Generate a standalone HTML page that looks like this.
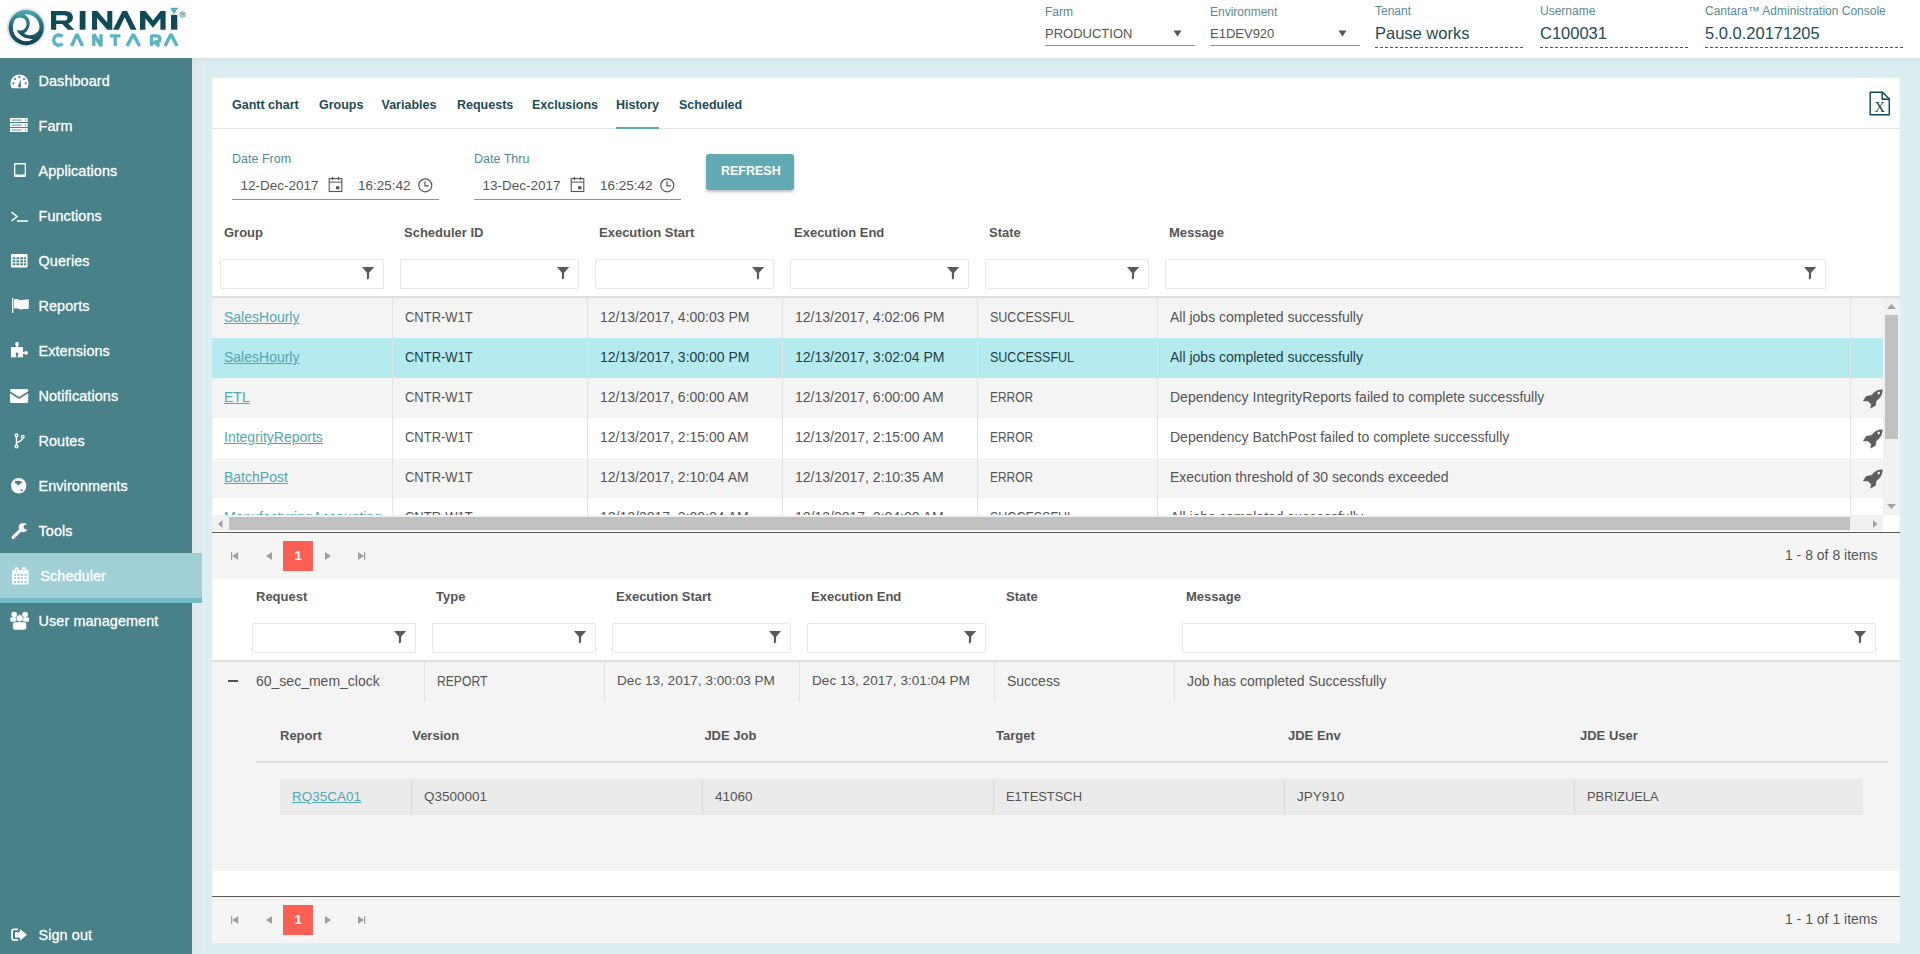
<!DOCTYPE html>
<html><head><meta charset="utf-8"><style>
*{margin:0;padding:0;box-sizing:border-box}
html,body{width:1920px;height:954px;overflow:hidden}
body{background:#dbeff2;font-family:"Liberation Sans",sans-serif;position:relative;color:#555}
.a{position:absolute}
.t{position:absolute;line-height:1;white-space:nowrap}
.nav{color:#fff;-webkit-text-stroke:0.3px #fff;letter-spacing:0.1px}
.hl{color:#4f8c95}
.hh{color:#5a8a92}
.tab{font-weight:700;color:#1d4b57}
.th{font-weight:700;color:#555}
.td{color:#555}
.lnk{color:#50a8b3;text-decoration:underline;text-underline-offset:1px}
.flt{position:absolute;height:30px;border:1px solid #e8e8e8;border-radius:2px;background:#fff}
.vb{position:absolute;width:1px;background:#e2e2e2}
svg{position:absolute;overflow:visible}
</style></head><body>
<div class="a" style="left:0px;top:0px;width:1920px;height:58px;background:#fff;"></div>
<svg style="left:0;top:0" width="200" height="58" viewBox="0 0 200 58">
  <defs><linearGradient id="lg" x1="0" y1="0" x2="0" y2="1"><stop offset="0" stop-color="#4eaab5"/><stop offset="0.5" stop-color="#1f6470"/><stop offset="1" stop-color="#0c4250"/></linearGradient></defs>
  <circle cx="26.2" cy="27.6" r="19.6" fill="#e4e4e4"/>
  <circle cx="26.2" cy="27.6" r="17.6" fill="url(#lg)"/>
  <g fill="#fff">
    <circle cx="20" cy="24" r="6.6"/><path d="M12.95 23L15.3 28.4L16.4 29.3L13 28.3Z"/>
    <path d="M24.1 14.3C27.5 16.5 30 19.5 29.8 23.5C29.6 27 27.5 31 24.1 33.5C27 35.5 31 36 35 34C37.5 32.5 39 30.5 39.5 28A13.3 13.3 0 0 0 24.1 14.3Z"/>
    <path d="M16.2 29.1C17.5 32.5 21 36.5 25.1 37.8C28 38.8 31 39 33.2 39.2A13.4 13.4 0 0 1 12.9 26.5C14 27.5 15 28.3 16.2 29.1Z"/>
  </g>
  <g fill="#0f4a58" fill-rule="evenodd">
    <path d="M51 11h13.8c5 0 8.2 2.8 8.2 6.6c0 3-1.9 5.2-4.9 5.9l6.3 6.2h-6.5l-5.6-5.7h-6.1v5.7h-5.2zM56.2 15.3v5.2h8.2c1.8 0 3.1-1 3.1-2.6s-1.3-2.6-3.1-2.6z"/>
    <rect x="79.7" y="11" width="5.8" height="18.7"/>
    <path d="M92 29.7V11h5.3l10 11.5V11h5v18.7h-5l-10.3-11.7v11.7z"/>
    <path d="M113 29.7l9.5-18.7h4.5l9.5 18.7h-5.8l-6-12.5-6 12.5z"/>
    <path d="M140 29.7V11h5.5l7.5 9.5 7.5-9.5h5.1v18.7h-5.2V18.5l-7.4 9.2-7.6-9.2v11.2z"/>
    <rect x="171" y="14.8" width="6.3" height="14.9"/>
  </g>
  <path d="M170 7.8h8.2l-4.1 6.4z" fill="#4fb0bd"/>
  <circle cx="182.5" cy="14.5" r="2.7" fill="none" stroke="#3f7f8a" stroke-width="0.8"/>
  <text x="182.5" y="16.2" font-family="Liberation Sans" font-size="4.2" font-weight="700" fill="#3f7f8a" text-anchor="middle">R</text>
  <g fill="none" stroke="#58b5c1" stroke-width="3.4" stroke-linejoin="bevel">
    <path d="M62.5 36.6a5.1 5.1 0 1 0 0 7"/>
    <path d="M71.5 46L77 34.2L82.5 46"/>
    <path d="M93.8 46V34.2l7.2 11.8V34.2"/>
    <path d="M110 35.9h10.5M115.2 35.9v10.1"/>
    <path d="M127 46l6.3-11.8l6.3 11.8"/>
    <path d="M151.5 46V35.9h4.8c2.3 0 3.6 1.2 3.6 3s-1.3 3-3.6 3h-2.5l5.5 4.1"/>
    <path d="M165 46l6-11.8l6 11.8"/>
  </g>
</svg>
<div class="t hh" style="left:1045px;top:5.84px;font-size:12px;">Farm</div>
<div class="t " style="left:1045px;top:27.00px;font-size:13px;">PRODUCTION</div>
<svg style="left:1173px;top:29.5px" width="9" height="7"><path d="M0.5 0.5h8l-4 6z" fill="#555"/></svg>
<div class="a" style="left:1045px;top:45px;width:150px;height:1px;background:#5aa9b3;"></div>
<div class="t hh" style="left:1210px;top:5.84px;font-size:12px;">Environment</div>
<div class="t " style="left:1210px;top:27.00px;font-size:13px;">E1DEV920</div>
<svg style="left:1338px;top:29.5px" width="9" height="7"><path d="M0.5 0.5h8l-4 6z" fill="#555"/></svg>
<div class="a" style="left:1210px;top:45px;width:150px;height:1px;background:#5aa9b3;"></div>
<div class="t hh" style="left:1375px;top:4.84px;font-size:12px;">Tenant</div>
<div class="t " style="left:1375px;top:24.83px;font-size:16.5px;color:#1d4b57">Pause works</div>
<div class="a" style="left:1375px;top:47px;width:150px;height:1px;background:repeating-linear-gradient(to right,#2f6873 0,#2f6873 3px,transparent 3px,transparent 5px);"></div>
<div class="t hh" style="left:1540px;top:4.84px;font-size:12px;">Username</div>
<div class="t " style="left:1540px;top:24.83px;font-size:16.5px;color:#1d4b57">C100031</div>
<div class="a" style="left:1540px;top:47px;width:150px;height:1px;background:repeating-linear-gradient(to right,#2f6873 0,#2f6873 3px,transparent 3px,transparent 5px);"></div>
<div class="t hh" style="left:1705px;top:4.84px;font-size:12px;">Cantara™ Administration Console</div>
<div class="t " style="left:1705px;top:24.83px;font-size:16.5px;color:#1d4b57">5.0.0.20171205</div>
<div class="a" style="left:1705px;top:47px;width:200px;height:1px;background:repeating-linear-gradient(to right,#2f6873 0,#2f6873 3px,transparent 3px,transparent 5px);"></div>
<div class="a" style="left:0px;top:58px;width:192px;height:896px;background:#48818a;"></div>
<div class="a" style="left:192px;top:58px;width:14px;height:896px;background:linear-gradient(to right,rgba(226,228,229,0.9),rgba(226,228,229,0.45) 45%,rgba(226,228,229,0));"></div>
<div class="a" style="left:192px;top:58px;width:1728px;height:6px;background:linear-gradient(to bottom,rgba(60,60,60,0.06),rgba(60,60,60,0));"></div>
<div class="a" style="left:0px;top:553px;width:202px;height:45px;background:#a0d0d5;"></div>
<div class="a" style="left:0px;top:598px;width:202px;height:5px;background:#74bbc4;"></div>
<div class="t nav" style="left:38.5px;top:73.81px;font-size:14.4px;">Dashboard</div>
<svg style="left:10px;top:74px" width="19" height="15" viewBox="0 0 19 15"><path d="M9.5 0.5C4.5 0.5 0.5 4.6 0.5 9.6C0.5 11 0.8 12.4 1.4 13.6L1.8 14.3H17.2L17.6 13.6C18.2 12.4 18.5 11 18.5 9.6C18.5 4.6 14.5 0.5 9.5 0.5Z" fill="#fff"/><g fill="#48818a"><circle cx="9.5" cy="3.2" r="1.1"/><circle cx="5" cy="5" r="1.1"/><circle cx="3.3" cy="9.4" r="1.1"/><circle cx="14" cy="5" r="1.1"/><circle cx="15.7" cy="9.4" r="1.1"/><path d="M8.2 11.8L10.8 5.2 10.9 12.2Z"/><circle cx="9.6" cy="12" r="1.6"/></g></svg>
<div class="t nav" style="left:38.5px;top:118.81px;font-size:14.4px;">Farm</div>
<svg style="left:10.4px;top:118px" width="17.7" height="14" viewBox="0 0 17.7 14"><g fill="#fff"><rect x="0" y="0" width="17.7" height="4"/><rect x="0" y="5" width="17.7" height="4"/><rect x="0" y="10" width="17.7" height="4"/></g><g fill="#48818a"><rect x="1.7" y="1.6" width="10" height="0.9"/><rect x="1.7" y="6.6" width="10" height="0.9"/><rect x="1.7" y="11.6" width="10" height="0.9"/><circle cx="15.6" cy="2" r="0.75"/><circle cx="15.6" cy="7" r="0.75"/><circle cx="15.6" cy="12" r="0.75"/></g></svg>
<div class="t nav" style="left:38.5px;top:163.81px;font-size:14.4px;">Applications</div>
<svg style="left:13.7px;top:163.3px" width="12" height="14" viewBox="0 0 11.7 13.6"><path fill-rule="evenodd" fill="#fff" d="M1.2 0H10.5C11.2 0 11.7 0.5 11.7 1.2V12.4C11.7 13.1 11.2 13.6 10.5 13.6H1.2C0.5 13.6 0 13.1 0 12.4V1.2C0 0.5 0.5 0 1.2 0ZM1.3 1.4V11.2H10.4V1.4Z"/><circle cx="5.85" cy="12.4" r="0.5" fill="#48818a"/></svg>
<div class="t nav" style="left:38.5px;top:208.81px;font-size:14.4px;">Functions</div>
<svg style="left:11px;top:211px" width="18" height="12" viewBox="0 0 18 12"><path d="M0.6 1.1L6.1 5.5L0.6 9.9" fill="none" stroke="#fff" stroke-width="1.5"/><rect x="6" y="9.3" width="11" height="1.5" fill="#fff"/></svg>
<div class="t nav" style="left:38.5px;top:253.81px;font-size:14.4px;">Queries</div>
<svg style="left:11.3px;top:253.5px" width="16.5" height="13.5" viewBox="0 0 16.5 13.5"><rect x="0" y="0" width="16.5" height="13.5" rx="1.2" fill="#fff"/><g fill="#48818a"><rect x="1.6" y="3.3" width="2.8" height="2"/><rect x="5.4" y="3.3" width="2.8" height="2"/><rect x="9.2" y="3.3" width="2.8" height="2"/><rect x="13" y="3.3" width="2" height="2"/><rect x="1.6" y="6.3" width="2.8" height="2"/><rect x="5.4" y="6.3" width="2.8" height="2"/><rect x="9.2" y="6.3" width="2.8" height="2"/><rect x="13" y="6.3" width="2" height="2"/><rect x="1.6" y="9.3" width="2.8" height="2"/><rect x="5.4" y="9.3" width="2.8" height="2"/><rect x="9.2" y="9.3" width="2.8" height="2"/><rect x="13" y="9.3" width="2" height="2"/></g></svg>
<div class="t nav" style="left:38.5px;top:298.81px;font-size:14.4px;">Reports</div>
<svg style="left:11.5px;top:298px" width="17" height="15" viewBox="0 0 17 15"><rect x="0" y="0" width="1.3" height="15" fill="#fff"/><path d="M2 1.5C5 0 7.5 2.8 10.5 2C13 1.3 15 1.5 16.8 1.2V10.5C14.5 11.5 12.5 10.8 10 11.3C7.2 12 5 9.3 2 10.8Z" fill="#fff"/></svg>
<div class="t nav" style="left:38.5px;top:343.81px;font-size:14.4px;">Extensions</div>
<svg style="left:10px;top:341px" width="19" height="18" viewBox="0 0 19 18"><g fill="#fff"><rect x="1" y="6" width="12" height="10.3"/><circle cx="7" cy="2.9" r="1.95"/><rect x="6.1" y="4" width="1.8" height="2.5"/><circle cx="16.1" cy="11.8" r="1.85"/><rect x="12.5" y="10.9" width="2.5" height="1.8"/></g><g fill="#48818a"><circle cx="7" cy="13" r="1.45"/><rect x="6.2" y="13" width="1.6" height="3.5"/></g></svg>
<div class="t nav" style="left:38.5px;top:388.81px;font-size:14.4px;">Notifications</div>
<svg style="left:10.3px;top:389.4px" width="18.2" height="14" viewBox="0 0 18.2 14"><path d="M1.5 0H16.7C17.5 0 18.2 0.7 18.2 1.5V2.2L9.1 8L0 2.2V1.5C0 0.7 0.7 0 1.5 0Z" fill="#fff"/><path d="M0 4.3L9.1 10.1L18.2 4.3V12.5C18.2 13.3 17.5 14 16.7 14H1.5C0.7 14 0 13.3 0 12.5Z" fill="#fff"/></svg>
<div class="t nav" style="left:38.5px;top:433.81px;font-size:14.4px;">Routes</div>
<svg style="left:13px;top:433px" width="13" height="16" viewBox="0 0 13 16"><g fill="none" stroke="#fff" stroke-width="1.4"><circle cx="3.5" cy="2.4" r="1.35"/><circle cx="9.7" cy="3.7" r="1.35"/><circle cx="3.5" cy="13.4" r="1.35"/><path d="M3.5 3.8V12M9.7 5.1C9.7 8.3 4.8 8 3.5 10.5"/></g></svg>
<div class="t nav" style="left:38.5px;top:478.81px;font-size:14.4px;">Environments</div>
<svg style="left:11.3px;top:478.3px" width="15.4" height="15.4" viewBox="0 0 15.4 15.4"><circle cx="7.7" cy="7.7" r="7.7" fill="#fff"/><path d="M3.7 3.6C5 2.7 6.5 2.5 8 2.7C9.2 2.9 10.3 3.5 11.4 4.2C10.8 4.8 10 5.1 9.3 5.6C8.6 6.2 8.4 7.1 7.8 7.7C7.1 7.3 6.6 6.5 5.9 6.1C5.2 5.6 4.4 5.3 3.8 4.7Z M9.6 11.4C10.4 11.3 11.3 11.4 12.1 11.6C11.6 12.4 10.9 13.1 10.1 13.7C9.8 12.9 9.6 12.2 9.6 11.4Z" fill="#48818a"/></svg>
<div class="t nav" style="left:38.5px;top:523.81px;font-size:14.4px;">Tools</div>
<svg style="left:10px;top:521px" width="20" height="20" viewBox="0 0 20 20"><path d="M11 8.6L3.2 16.4" stroke="#fff" stroke-width="3.3" stroke-linecap="round"/><circle cx="13.2" cy="6.6" r="4.6" fill="#fff"/><circle cx="15.6" cy="6.1" r="2.1" fill="#48818a"/><path d="M15.6 4L20 1.5V10L15.6 8.2Z" fill="#48818a"/><circle cx="4.3" cy="15.5" r="0.55" fill="#9a7fb0"/></svg>
<div class="t nav" style="left:40.3px;top:568.81px;font-size:14.4px;">Scheduler</div>
<svg style="left:12px;top:566px" width="17" height="19" viewBox="0 0 17 19"><g fill="#fff"><rect x="0.1" y="4" width="16.5" height="14.5" rx="0.8"/><rect x="2.8" y="1" width="3.8" height="5" rx="1.9"/><rect x="10" y="1" width="3.8" height="5" rx="1.9"/></g><g fill="#a0d0d5"><rect x="4.3" y="2.6" width="0.8" height="3.2"/><rect x="11.5" y="2.6" width="0.8" height="3.2"/><rect x="2" y="7.8" width="2" height="2"/><rect x="5.2" y="7.8" width="2.6" height="2"/><rect x="9" y="7.8" width="2" height="2"/><rect x="12.5" y="7.8" width="2.3" height="2"/><rect x="2" y="11.2" width="2" height="2.1"/><rect x="5.2" y="11.2" width="2.6" height="2.1"/><rect x="9" y="11.2" width="2" height="2.1"/><rect x="12.5" y="11.2" width="2.3" height="2.1"/><rect x="2" y="15" width="2" height="2"/><rect x="5.2" y="15" width="2.6" height="2"/><rect x="9" y="15" width="2" height="2"/><rect x="12.5" y="15" width="2.3" height="2"/></g></svg>
<div class="t nav" style="left:38.5px;top:613.81px;font-size:14.4px;">User management</div>
<svg style="left:9.8px;top:612px" width="19.5" height="18.5" viewBox="0 0 19.5 18.5"><g fill="#fff"><circle cx="4.2" cy="2.5" r="2.8"/><circle cx="15.1" cy="2.5" r="2.8"/><rect x="0.3" y="5.2" width="6" height="4.6" rx="1.2"/><rect x="13" y="5.2" width="6" height="4.6" rx="1.2"/></g><g fill="#fff" stroke="#48818a" stroke-width="0.5"><rect x="2.7" y="9.9" width="13.8" height="8.1" rx="2.2"/><circle cx="9.7" cy="6.3" r="3.5"/></g></svg>
<div class="t nav" style="left:38.5px;top:927.81px;font-size:14.4px;">Sign out</div>
<svg style="left:10px;top:927px" width="18" height="16" viewBox="0 0 18 16"><path d="M8 2.35H4C2.8 2.35 2.05 3.1 2.05 4.3V11C2.05 12.2 2.8 12.95 4 12.95H8" fill="none" stroke="#fff" stroke-width="1.75"/><path d="M5 5.2H9.9V1.9L17 7.8L9.9 13.7V10.5H5Z" fill="#fff"/></svg>
<div class="a" style="left:212px;top:78px;width:1688px;height:865px;background:#fff;"></div>
<div class="t tab" style="left:232px;top:98.62px;font-size:12.5px;">Gantt chart</div>
<div class="t tab" style="left:319px;top:98.62px;font-size:12.5px;">Groups</div>
<div class="t tab" style="left:381.5px;top:98.62px;font-size:12.5px;">Variables</div>
<div class="t tab" style="left:457px;top:98.62px;font-size:12.5px;">Requests</div>
<div class="t tab" style="left:532px;top:98.62px;font-size:12.5px;">Exclusions</div>
<div class="t tab" style="left:616px;top:98.62px;font-size:12.5px;">History</div>
<div class="t tab" style="left:679px;top:98.62px;font-size:12.5px;">Scheduled</div>
<div class="a" style="left:212px;top:128px;width:1688px;height:1px;background:#e2e2e2;"></div>
<div class="a" style="left:616px;top:127px;width:43px;height:2px;background:#5aa9b3;"></div>
<svg style="left:1869px;top:91px" width="22" height="25" viewBox="0 0 22 25"><path d="M1.2 1.2H13.6L20.3 7.9V23.8H1.2Z" fill="none" stroke="#0d4654" stroke-width="1.4" stroke-linejoin="round"/><path d="M13.2 1.2V8.2H20.3" fill="none" stroke="#0d4654" stroke-width="1.4"/><text x="10.7" y="20.8" font-family="Liberation Serif" font-size="14.5" fill="#0d4654" text-anchor="middle">X</text></svg>
<div class="t hl" style="left:232px;top:153.02px;font-size:12.5px;">Date From</div>
<div class="t td" style="left:240.5px;top:179.07px;font-size:13.5px;">12-Dec-2017</div>
<svg style="left:328px;top:177px" width="15" height="15" viewBox="0 0 15 15"><rect x="1.2" y="1.6" width="12.6" height="12.9" fill="none" stroke="#555" stroke-width="1.1"/><rect x="1.2" y="4.6" width="12.6" height="1" fill="#555"/><rect x="3.9" y="0" width="1.1" height="3" fill="#555"/><rect x="10" y="0" width="1.1" height="3" fill="#555"/><rect x="8.1" y="9.2" width="3.3" height="3.1" fill="#555"/></svg>
<div class="t td" style="left:358px;top:179.07px;font-size:13.5px;">16:25:42</div>
<svg style="left:418px;top:177.5px" width="15" height="15" viewBox="0 0 15 15"><circle cx="7.3" cy="7.3" r="6.5" fill="none" stroke="#555" stroke-width="1.2"/><path d="M7 3.3V7.8H10.8" fill="none" stroke="#555" stroke-width="1.2"/></svg>
<div class="a" style="left:232px;top:199px;width:207px;height:1px;background:#5aa9b3;"></div>
<div class="t hl" style="left:474px;top:153.02px;font-size:12.5px;">Date Thru</div>
<div class="t td" style="left:482.5px;top:179.07px;font-size:13.5px;">13-Dec-2017</div>
<svg style="left:570px;top:177px" width="15" height="15" viewBox="0 0 15 15"><rect x="1.2" y="1.6" width="12.6" height="12.9" fill="none" stroke="#555" stroke-width="1.1"/><rect x="1.2" y="4.6" width="12.6" height="1" fill="#555"/><rect x="3.9" y="0" width="1.1" height="3" fill="#555"/><rect x="10" y="0" width="1.1" height="3" fill="#555"/><rect x="8.1" y="9.2" width="3.3" height="3.1" fill="#555"/></svg>
<div class="t td" style="left:600px;top:179.07px;font-size:13.5px;">16:25:42</div>
<svg style="left:660px;top:177.5px" width="15" height="15" viewBox="0 0 15 15"><circle cx="7.3" cy="7.3" r="6.5" fill="none" stroke="#555" stroke-width="1.2"/><path d="M7 3.3V7.8H10.8" fill="none" stroke="#555" stroke-width="1.2"/></svg>
<div class="a" style="left:474px;top:199px;width:207px;height:1px;background:#5aa9b3;"></div>
<div class="a" style="left:706px;top:154px;width:88px;height:36px;background:#61aab3;border-radius:3px;box-shadow:0 2px 3px rgba(0,0,0,0.25)"></div>
<div class="t " style="left:721px;top:165.22px;font-size:12.5px;color:#fff;font-weight:700">REFRESH</div>
<div class="t th" style="left:224px;top:225.90px;font-size:13px;">Group</div>
<div class="t th" style="left:404px;top:225.90px;font-size:13px;">Scheduler ID</div>
<div class="t th" style="left:599px;top:225.90px;font-size:13px;">Execution Start</div>
<div class="t th" style="left:794px;top:225.90px;font-size:13px;">Execution End</div>
<div class="t th" style="left:989px;top:225.90px;font-size:13px;">State</div>
<div class="t th" style="left:1169px;top:225.90px;font-size:13px;">Message</div>
<div class="flt" style="left:220px;top:259px;width:164px"></div>
<svg style="left:362px;top:267px" width="13" height="14" viewBox="0 0 13 14"><path d="M0 0H12.2L7.1 5.7V11.3L4.9 12.8V5.7Z" fill="#5a5a5a"/></svg>
<div class="flt" style="left:400px;top:259px;width:179px"></div>
<svg style="left:557px;top:267px" width="13" height="14" viewBox="0 0 13 14"><path d="M0 0H12.2L7.1 5.7V11.3L4.9 12.8V5.7Z" fill="#5a5a5a"/></svg>
<div class="flt" style="left:595px;top:259px;width:179px"></div>
<svg style="left:752px;top:267px" width="13" height="14" viewBox="0 0 13 14"><path d="M0 0H12.2L7.1 5.7V11.3L4.9 12.8V5.7Z" fill="#5a5a5a"/></svg>
<div class="flt" style="left:790px;top:259px;width:179px"></div>
<svg style="left:947px;top:267px" width="13" height="14" viewBox="0 0 13 14"><path d="M0 0H12.2L7.1 5.7V11.3L4.9 12.8V5.7Z" fill="#5a5a5a"/></svg>
<div class="flt" style="left:985px;top:259px;width:164px"></div>
<svg style="left:1127px;top:267px" width="13" height="14" viewBox="0 0 13 14"><path d="M0 0H12.2L7.1 5.7V11.3L4.9 12.8V5.7Z" fill="#5a5a5a"/></svg>
<div class="flt" style="left:1165px;top:259px;width:661px"></div>
<svg style="left:1804px;top:267px" width="13" height="14" viewBox="0 0 13 14"><path d="M0 0H12.2L7.1 5.7V11.3L4.9 12.8V5.7Z" fill="#5a5a5a"/></svg>
<div class="a" style="left:212px;top:296px;width:1688px;height:2px;background:#dedede;"></div>
<div class="a" style="left:212px;top:298px;width:1671px;height:217px;overflow:hidden">
<div class="a" style="left:0;top:0px;width:1671px;height:40px;background:#f4f4f4"></div>
<div class="t lnk" style="left:12px;top:12.45px;font-size:14px;">SalesHourly</div>
<div class="t td" style="left:193px;top:12.45px;font-size:14px;transform:scaleX(0.926);transform-origin:0 0;">CNTR-W1T</div>
<div class="t td" style="left:388px;top:12.45px;font-size:14px;">12/13/2017, 4:00:03 PM</div>
<div class="t td" style="left:583px;top:12.45px;font-size:14px;">12/13/2017, 4:02:06 PM</div>
<div class="t td" style="left:778px;top:12.45px;font-size:14px;transform:scaleX(0.893);transform-origin:0 0;">SUCCESSFUL</div>
<div class="t td" style="left:958px;top:12.45px;font-size:14px;">All jobs completed successfully</div>
<div class="a" style="left:0;top:40px;width:1671px;height:40px;background:#b5eaee"></div>
<div class="t lnk" style="left:12px;top:52.45px;font-size:14px;">SalesHourly</div>
<div class="t td" style="left:193px;top:52.45px;font-size:14px;transform:scaleX(0.926);transform-origin:0 0;color:#1f3f47">CNTR-W1T</div>
<div class="t td" style="left:388px;top:52.45px;font-size:14px;color:#1f3f47">12/13/2017, 3:00:00 PM</div>
<div class="t td" style="left:583px;top:52.45px;font-size:14px;color:#1f3f47">12/13/2017, 3:02:04 PM</div>
<div class="t td" style="left:778px;top:52.45px;font-size:14px;transform:scaleX(0.893);transform-origin:0 0;color:#1f3f47">SUCCESSFUL</div>
<div class="t td" style="left:958px;top:52.45px;font-size:14px;color:#1f3f47">All jobs completed successfully</div>
<div class="a" style="left:0;top:80px;width:1671px;height:40px;background:#f4f4f4"></div>
<div class="t lnk" style="left:12px;top:92.45px;font-size:14px;">ETL</div>
<div class="t td" style="left:193px;top:92.45px;font-size:14px;transform:scaleX(0.926);transform-origin:0 0;">CNTR-W1T</div>
<div class="t td" style="left:388px;top:92.45px;font-size:14px;">12/13/2017, 6:00:00 AM</div>
<div class="t td" style="left:583px;top:92.45px;font-size:14px;">12/13/2017, 6:00:00 AM</div>
<div class="t td" style="left:778px;top:92.45px;font-size:14px;transform:scaleX(0.854);transform-origin:0 0;">ERROR</div>
<div class="t td" style="left:958px;top:92.45px;font-size:14px;">Dependency IntegrityReports failed to complete successfully</div>
<svg style="left:1650px;top:90px" width="22" height="22" viewBox="0 0 22 22"><path d="M20.4 1.7C17.5 1.6 15.5 2.2 13.6 3.4C12 4.5 10.8 5.8 9.6 7.2L4.2 8.3L1.2 12.9L5.9 12.9L9.3 16.3L8.5 20.2L13.6 17.4L14.1 13.1C15.6 11.9 17 10.6 18.1 9.2C19.6 7 20.4 4.5 20.4 1.7Z" fill="#5e5e5e" stroke="#5e5e5e" stroke-width="0.4" stroke-linejoin="round"/><circle cx="16.7" cy="5.1" r="1.25" fill="#fff"/></svg>
<div class="a" style="left:0;top:120px;width:1671px;height:40px;background:#ffffff"></div>
<div class="t lnk" style="left:12px;top:132.45px;font-size:14px;">IntegrityReports</div>
<div class="t td" style="left:193px;top:132.45px;font-size:14px;transform:scaleX(0.926);transform-origin:0 0;">CNTR-W1T</div>
<div class="t td" style="left:388px;top:132.45px;font-size:14px;">12/13/2017, 2:15:00 AM</div>
<div class="t td" style="left:583px;top:132.45px;font-size:14px;">12/13/2017, 2:15:00 AM</div>
<div class="t td" style="left:778px;top:132.45px;font-size:14px;transform:scaleX(0.854);transform-origin:0 0;">ERROR</div>
<div class="t td" style="left:958px;top:132.45px;font-size:14px;">Dependency BatchPost failed to complete successfully</div>
<svg style="left:1650px;top:130px" width="22" height="22" viewBox="0 0 22 22"><path d="M20.4 1.7C17.5 1.6 15.5 2.2 13.6 3.4C12 4.5 10.8 5.8 9.6 7.2L4.2 8.3L1.2 12.9L5.9 12.9L9.3 16.3L8.5 20.2L13.6 17.4L14.1 13.1C15.6 11.9 17 10.6 18.1 9.2C19.6 7 20.4 4.5 20.4 1.7Z" fill="#5e5e5e" stroke="#5e5e5e" stroke-width="0.4" stroke-linejoin="round"/><circle cx="16.7" cy="5.1" r="1.25" fill="#fff"/></svg>
<div class="a" style="left:0;top:160px;width:1671px;height:40px;background:#f4f4f4"></div>
<div class="t lnk" style="left:12px;top:172.45px;font-size:14px;">BatchPost</div>
<div class="t td" style="left:193px;top:172.45px;font-size:14px;transform:scaleX(0.926);transform-origin:0 0;">CNTR-W1T</div>
<div class="t td" style="left:388px;top:172.45px;font-size:14px;">12/13/2017, 2:10:04 AM</div>
<div class="t td" style="left:583px;top:172.45px;font-size:14px;">12/13/2017, 2:10:35 AM</div>
<div class="t td" style="left:778px;top:172.45px;font-size:14px;transform:scaleX(0.854);transform-origin:0 0;">ERROR</div>
<div class="t td" style="left:958px;top:172.45px;font-size:14px;">Execution threshold of 30 seconds exceeded</div>
<svg style="left:1650px;top:170px" width="22" height="22" viewBox="0 0 22 22"><path d="M20.4 1.7C17.5 1.6 15.5 2.2 13.6 3.4C12 4.5 10.8 5.8 9.6 7.2L4.2 8.3L1.2 12.9L5.9 12.9L9.3 16.3L8.5 20.2L13.6 17.4L14.1 13.1C15.6 11.9 17 10.6 18.1 9.2C19.6 7 20.4 4.5 20.4 1.7Z" fill="#5e5e5e" stroke="#5e5e5e" stroke-width="0.4" stroke-linejoin="round"/><circle cx="16.7" cy="5.1" r="1.25" fill="#fff"/></svg>
<div class="a" style="left:0;top:200px;width:1671px;height:40px;background:#ffffff"></div>
<div class="t lnk" style="left:12px;top:212.45px;font-size:14px;">ManufacturingAccounting</div>
<div class="t td" style="left:193px;top:212.45px;font-size:14px;transform:scaleX(0.926);transform-origin:0 0;">CNTR-W1T</div>
<div class="t td" style="left:388px;top:212.45px;font-size:14px;">12/13/2017, 2:00:04 AM</div>
<div class="t td" style="left:583px;top:212.45px;font-size:14px;">12/13/2017, 2:04:00 AM</div>
<div class="t td" style="left:778px;top:212.45px;font-size:14px;transform:scaleX(0.893);transform-origin:0 0;">SUCCESSFUL</div>
<div class="t td" style="left:958px;top:212.45px;font-size:14px;">All jobs completed successfully</div>
<div class="vb" style="left:180px;top:0;height:217px"></div>
<div class="vb" style="left:375px;top:0;height:217px"></div>
<div class="vb" style="left:570px;top:0;height:217px"></div>
<div class="vb" style="left:765px;top:0;height:217px"></div>
<div class="vb" style="left:945px;top:0;height:217px"></div>
<div class="vb" style="left:1638px;top:0;height:217px"></div>
</div>
<div class="a" style="left:1883px;top:298px;width:17px;height:218px;background:#f1f1f1;"></div>
<div class="a" style="left:1885px;top:315px;width:12.5px;height:124px;background:#c1c1c1;"></div>
<svg style="left:1887px;top:304px" width="9" height="5"><path d="M0 5L4.5 0L9 5Z" fill="#a3a3a3"/></svg>
<svg style="left:1887px;top:503.5px" width="9" height="5"><path d="M0 0L4.5 5L9 0Z" fill="#a3a3a3"/></svg>
<div class="a" style="left:212px;top:515px;width:1671px;height:16px;background:#f1f1f1;"></div>
<div class="a" style="left:229px;top:517px;width:1621px;height:13px;background:#c1c1c1;"></div>
<svg style="left:217.8px;top:519.8px" width="5" height="8"><path d="M4.5 0L0 4L4.5 8Z" fill="#a3a3a3"/></svg>
<svg style="left:1872.5px;top:519.8px" width="5" height="8"><path d="M0 0L4.5 4L0 8Z" fill="#a3a3a3"/></svg>
<div class="a" style="left:1883px;top:515px;width:17px;height:16px;background:#fff;"></div>
<div class="a" style="left:212px;top:531.5px;width:1688px;height:1.5px;background:#595959;"></div>
<div class="a" style="left:212px;top:533px;width:1688px;height:45.5px;background:#f5f5f5;"></div>
<svg style="left:230.8px;top:551.5px" width="8" height="8"><rect x="0" y="0" width="1.2" height="8" fill="#a0a0a0"/><path d="M7.2 0L1.2 4L7.2 8Z" fill="#a0a0a0"/></svg>
<svg style="left:265.8px;top:551.5px" width="6" height="8"><path d="M6 0L0 4L6 8Z" fill="#a0a0a0"/></svg>
<div class="a" style="left:283px;top:541px;width:30px;height:30px;background:#fd5f55;"></div>
<div class="t " style="left:294.5px;top:548.77px;font-size:13.5px;color:#fff;font-weight:700">1</div>
<svg style="left:325.2px;top:551.5px" width="6" height="8"><path d="M0 0L6 4L0 8Z" fill="#a0a0a0"/></svg>
<svg style="left:358px;top:551.5px" width="8" height="8"><path d="M0 0L6 4L0 8Z" fill="#a0a0a0"/><rect x="6" y="0" width="1.2" height="8" fill="#a0a0a0"/></svg>
<div class="t td" style="right:42.5px;top:548.35px;font-size:14px;color:#555">1 - 8 of 8 items</div>
<div class="t th" style="left:256px;top:590.00px;font-size:13px;">Request</div>
<div class="t th" style="left:436px;top:590.00px;font-size:13px;">Type</div>
<div class="t th" style="left:616px;top:590.00px;font-size:13px;">Execution Start</div>
<div class="t th" style="left:811px;top:590.00px;font-size:13px;">Execution End</div>
<div class="t th" style="left:1006px;top:590.00px;font-size:13px;">State</div>
<div class="t th" style="left:1186px;top:590.00px;font-size:13px;">Message</div>
<div class="flt" style="left:252px;top:623px;width:164px"></div>
<svg style="left:394px;top:631px" width="13" height="14" viewBox="0 0 13 14"><path d="M0 0H12.2L7.1 5.7V11.3L4.9 12.8V5.7Z" fill="#5a5a5a"/></svg>
<div class="flt" style="left:432px;top:623px;width:164px"></div>
<svg style="left:574px;top:631px" width="13" height="14" viewBox="0 0 13 14"><path d="M0 0H12.2L7.1 5.7V11.3L4.9 12.8V5.7Z" fill="#5a5a5a"/></svg>
<div class="flt" style="left:612px;top:623px;width:179px"></div>
<svg style="left:769px;top:631px" width="13" height="14" viewBox="0 0 13 14"><path d="M0 0H12.2L7.1 5.7V11.3L4.9 12.8V5.7Z" fill="#5a5a5a"/></svg>
<div class="flt" style="left:807px;top:623px;width:179px"></div>
<svg style="left:964px;top:631px" width="13" height="14" viewBox="0 0 13 14"><path d="M0 0H12.2L7.1 5.7V11.3L4.9 12.8V5.7Z" fill="#5a5a5a"/></svg>
<div class="flt" style="left:1182px;top:623px;width:694px"></div>
<svg style="left:1854px;top:631px" width="13" height="14" viewBox="0 0 13 14"><path d="M0 0H12.2L7.1 5.7V11.3L4.9 12.8V5.7Z" fill="#5a5a5a"/></svg>
<div class="a" style="left:212px;top:660px;width:1688px;height:2px;background:#dedede;"></div>
<div class="a" style="left:212px;top:662px;width:1688px;height:40px;background:#f4f4f4;"></div>
<div class="a" style="left:228px;top:680px;width:10px;height:2.2px;background:#555;"></div>
<div class="t td" style="left:256px;top:673.75px;font-size:14px;">60_sec_mem_clock</div>
<div class="t td" style="left:437px;top:673.75px;font-size:14px;transform:scaleX(0.867);transform-origin:0 0;">REPORT</div>
<div class="t td" style="left:617px;top:674.09px;font-size:13.6px;">Dec 13, 2017, 3:00:03 PM</div>
<div class="t td" style="left:812px;top:674.09px;font-size:13.6px;">Dec 13, 2017, 3:01:04 PM</div>
<div class="t td" style="left:1007px;top:673.75px;font-size:14px;">Success</div>
<div class="t td" style="left:1187px;top:673.75px;font-size:14px;">Job has completed Successfully</div>
<div class="vb" style="left:424px;top:662px;height:40px"></div>
<div class="vb" style="left:604px;top:662px;height:40px"></div>
<div class="vb" style="left:799px;top:662px;height:40px"></div>
<div class="vb" style="left:994px;top:662px;height:40px"></div>
<div class="vb" style="left:1174px;top:662px;height:40px"></div>
<div class="a" style="left:212px;top:702px;width:1688px;height:169px;background:#f4f4f4;"></div>
<div class="t th" style="left:280px;top:729.40px;font-size:13px;">Report</div>
<div class="t th" style="left:412.2px;top:729.40px;font-size:13px;">Version</div>
<div class="t th" style="left:704.4px;top:729.40px;font-size:13px;">JDE Job</div>
<div class="t th" style="left:996px;top:729.40px;font-size:13px;">Target</div>
<div class="t th" style="left:1288px;top:729.40px;font-size:13px;">JDE Env</div>
<div class="t th" style="left:1580px;top:729.40px;font-size:13px;">JDE User</div>
<div class="a" style="left:256px;top:761px;width:1632px;height:2px;background:#dedede;"></div>
<div class="a" style="left:280px;top:779px;width:1583px;height:36px;background:#ebebeb;"></div>
<div class="t lnk" style="left:292px;top:790.17px;font-size:13.5px;">RQ35CA01</div>
<div class="t td" style="left:424px;top:790.17px;font-size:13.5px;">Q3500001</div>
<div class="t td" style="left:715px;top:790.17px;font-size:13.5px;">41060</div>
<div class="t td" style="left:1006px;top:790.17px;font-size:13.5px;transform:scaleX(0.955);transform-origin:0 0;">E1TESTSCH</div>
<div class="t td" style="left:1297px;top:790.17px;font-size:13.5px;">JPY910</div>
<div class="t td" style="left:1587px;top:790.17px;font-size:13.5px;transform:scaleX(0.953);transform-origin:0 0;">PBRIZUELA</div>
<div class="vb" style="left:411px;top:779px;height:36px;background:#dadada"></div>
<div class="vb" style="left:702px;top:779px;height:36px;background:#dadada"></div>
<div class="vb" style="left:993px;top:779px;height:36px;background:#dadada"></div>
<div class="vb" style="left:1284px;top:779px;height:36px;background:#dadada"></div>
<div class="vb" style="left:1574px;top:779px;height:36px;background:#dadada"></div>
<div class="a" style="left:212px;top:895.5px;width:1688px;height:1.5px;background:#595959;"></div>
<div class="a" style="left:212px;top:897px;width:1688px;height:45.5px;background:#f5f5f5;"></div>
<svg style="left:230.8px;top:915.5px" width="8" height="8"><rect x="0" y="0" width="1.2" height="8" fill="#a0a0a0"/><path d="M7.2 0L1.2 4L7.2 8Z" fill="#a0a0a0"/></svg>
<svg style="left:265.8px;top:915.5px" width="6" height="8"><path d="M6 0L0 4L6 8Z" fill="#a0a0a0"/></svg>
<div class="a" style="left:283px;top:905px;width:30px;height:30px;background:#fd5f55;"></div>
<div class="t " style="left:294.5px;top:912.77px;font-size:13.5px;color:#fff;font-weight:700">1</div>
<svg style="left:325.2px;top:915.5px" width="6" height="8"><path d="M0 0L6 4L0 8Z" fill="#a0a0a0"/></svg>
<svg style="left:358px;top:915.5px" width="8" height="8"><path d="M0 0L6 4L0 8Z" fill="#a0a0a0"/><rect x="6" y="0" width="1.2" height="8" fill="#a0a0a0"/></svg>
<div class="t td" style="right:42.5px;top:912.35px;font-size:14px;color:#555">1 - 1 of 1 items</div>
</body></html>
